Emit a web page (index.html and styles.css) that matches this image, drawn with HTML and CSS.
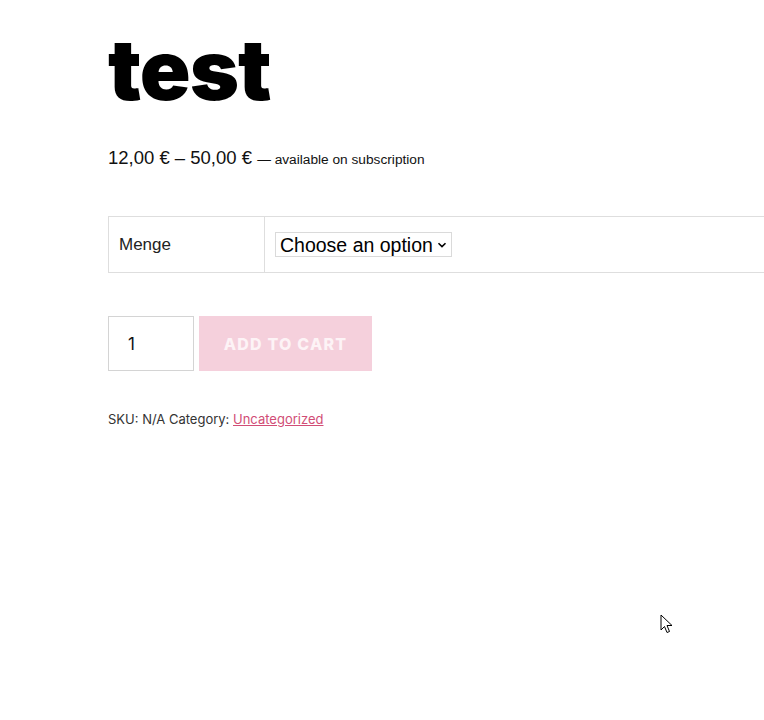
FILE: index.html
```html
<!DOCTYPE html>
<html>
<head>
<meta charset="utf-8">
<link rel="stylesheet" href="styles.css">
</head>
<body>
<main class="product">
  <h1 class="title">test</h1>
  <p class="price"><span class="amount">12,00 € – 50,00 €</span> <span class="sub">— available on subscription</span></p>
  <table class="variations">
    <tr>
      <th class="label">Menge</th>
      <td class="value">
        <select class="select"><option>Choose an option</option></select>
      </td>
    </tr>
  </table>
  <form class="cart">
    <input class="qty" type="text" value="1">
    <button class="add" type="button">Add to cart</button>
  </form>
  <div class="meta">SKU: N/A Category: <a href="#" class="cat">Uncategorized</a></div>
</main>
<svg class="cursor" width="14" height="22" viewBox="0 0 14 22"><path d="M1 1 L1 16 L4.5 12.5 L7 18.5 L9.5 17.5 L7 11.5 L12 11.5 Z" fill="#fff" stroke="#000" stroke-width="1"/></svg>
</body>
</html>
```
FILE: styles.css
```css
html, body { margin: 0; padding: 0; background: #fff; overflow: hidden; }
.product { padding: 0 0 0 108px; font-family: "Liberation Sans", Arial, sans-serif; color: #111; }
.title { margin: 0; padding-top: 22px; font-family: Inter, sans-serif; font-weight: 900; font-size: 84px; letter-spacing: -1px; line-height: 96px; color: #000; }
.price { margin: 28px 0 0; font-size: 18.5px; line-height: 24px; color: #111; }
.price .sub { font-size: 13.7px; }
.variations { margin-top: 44px; border-collapse: collapse; width: 100%; }
.variations th, .variations td { border: 1px solid #dedede; height: 55px; padding: 0; }
.variations td { border-right: none; }
.label { width: 145px; text-align: left; font-weight: normal; font-size: 17px; padding-left: 10px !important; color: #222; }
.value { padding-left: 10px !important; }
.select { -webkit-appearance: none; appearance: none; font-family: "Liberation Sans", Arial, sans-serif; font-size: 19.5px; color: #000; border: 1px solid #dadada; border-radius: 0; height: 25px; padding: 0 14px 0 4px; width: 177px; background: #fff url("data:image/svg+xml;utf8,<svg xmlns='http://www.w3.org/2000/svg' width='10' height='6' viewBox='0 0 10 6'><path d='M1.5 1.2 L5 4.6 L8.5 1.2' fill='none' stroke='black' stroke-width='1.6'/></svg>") no-repeat right 4px center; }
.cart { margin-top: 43px; display: flex; gap: 5px; }
.qty { box-sizing: border-box; width: 86px; height: 55px; border: 1px solid #d4d4d4; padding: 0 0 0 19px; font-family: Inter, sans-serif; font-size: 17px; color: #111; outline: none; }
.add { box-sizing: border-box; width: 173px; height: 55px; border: none; background: #f5d0dc; color: #fdf3f6; font-family: Inter, sans-serif; font-weight: 800; font-size: 16px; text-transform: uppercase; letter-spacing: 1.2px; }
.meta { margin-top: 39px; font-family: Inter, sans-serif; font-size: 13px; color: #333; line-height: 18px; }
.cat { color: #d14d76; }
.cursor { position: absolute; left: 660px; top: 614px; }
```
